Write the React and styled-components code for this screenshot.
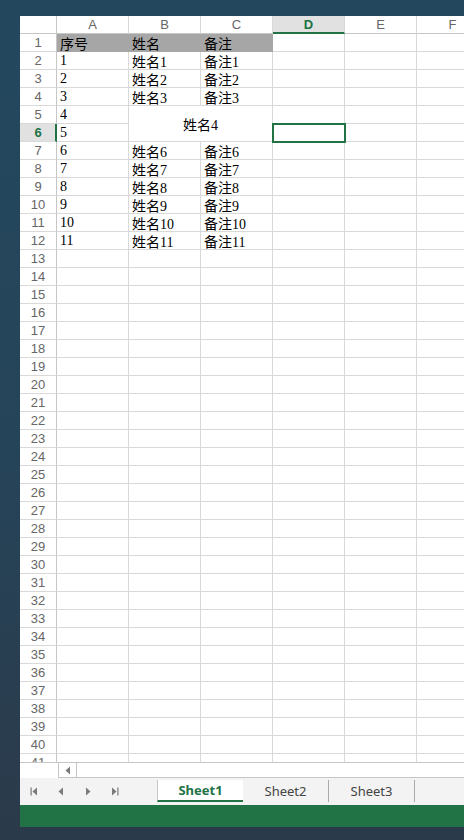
import React from 'react';
import styled, { createGlobalStyle, css } from 'styled-components';

const GlobalStyle = createGlobalStyle`
  html, body { margin: 0; padding: 0; height: 100%; }
  body { overflow: hidden; }
  #root { height: 100%; }
`;

const green = '#217346';
const gridLine = '#d9d9d9';
const headLine = '#c6c6c6';

const Desktop = styled.div`
  height: 840px;
  box-sizing: border-box;
  padding: 16px 0 13px 20px;
  background: linear-gradient(to bottom, #23485e 0%, #264459 55%, #2b3a4a 100%);
  display: flex;
`;

const Window = styled.div`
  flex: 1;
  background: #fff;
  display: flex;
  flex-direction: column;
  overflow: hidden;
`;

const SheetArea = styled.div`
  flex: 1;
  overflow: hidden;
`;

const Grid = styled.div`
  display: grid;
  grid-template-columns: 37px repeat(6, 72px);
  grid-auto-rows: 18px;
  width: max-content;
`;

const Corner = styled.div`
  box-sizing: border-box;
  border-right: 1px solid ${headLine};
  border-bottom: 1px solid ${headLine};
`;

const ColHead = styled.div`
  box-sizing: border-box;
  display: flex;
  align-items: center;
  justify-content: center;
  font-family: "Liberation Sans", "Noto Sans", sans-serif;
  font-size: 13px;
  color: #666;
  border-right: 1px solid ${gridLine};
  border-bottom: 1px solid ${headLine};
  ${({ $active }) => $active && css`
    background: #e1e1e1;
    color: ${green};
    font-weight: bold;
    border-bottom: 2px solid ${green};
    padding-top: 1px;
  `}
`;

const RowHead = styled.div`
  box-sizing: border-box;
  display: flex;
  align-items: center;
  justify-content: center;
  font-family: "Liberation Sans", "Noto Sans", sans-serif;
  font-size: 13px;
  color: #666;
  border-right: 1px solid ${headLine};
  border-bottom: 1px solid ${gridLine};
  ${({ $active }) => $active && css`
    background: #e1e1e1;
    color: ${green};
    font-weight: bold;
    border-right: 2px solid ${green};
    padding-left: 1px;
  `}
`;

const Cell = styled.div`
  box-sizing: border-box;
  display: flex;
  align-items: center;
  padding: 1px 0 0 3px;
  font-family: "Liberation Serif", "Noto Sans CJK SC", serif;
  font-size: 14px;
  color: #000;
  white-space: nowrap;
  border-right: 1px solid ${gridLine};
  border-bottom: 1px solid ${gridLine};
  ${({ $fill }) => $fill && css`
    background: ${$fill};
    border-color: ${$fill};
  `}
  ${({ $merged }) => $merged && css`
    grid-column: span 2;
    grid-row: span 2;
    justify-content: center;
    padding-left: 0;
  `}
  ${({ $selected }) => $selected && css`
    position: relative;
    z-index: 1;
    outline: 2px solid ${green};
    outline-offset: -1px;
  `}
`;

const ScrollRow = styled.div`
  height: 16px;
  display: flex;
  flex-shrink: 0;
`;

const ScrollSpacer = styled.div`
  width: 38px;
  border-top: 1px solid ${headLine};
`;

const ScrollTrack = styled.div`
  flex: 1;
  display: flex;
  box-sizing: border-box;
  border: 1px solid ${headLine};
  border-right: none;
`;

const ScrollBtn = styled.div`
  width: 17px;
  display: flex;
  align-items: center;
  justify-content: center;
  border-right: 1px solid ${headLine};
`;

const TabBar = styled.div`
  height: 27px;
  flex-shrink: 0;
  background: #f3f3f3;
  display: flex;
  align-items: stretch;
`;

const NavGroup = styled.div`
  width: 137px;
  box-sizing: border-box;
  display: flex;
  align-items: center;
`;

const NavBtn = styled.div`
  width: 27px;
  display: flex;
  align-items: center;
  justify-content: center;
`;

const Tab = styled.div`
  width: 86px;
  box-sizing: border-box;
  margin: 2px 0 3px;
  display: flex;
  align-items: center;
  justify-content: center;
  font-family: "Noto Sans", "Liberation Sans", sans-serif;
  font-size: 13px;
  color: #444;
  border-right: 1px solid #aaa;
  ${({ $active }) => $active && css`
    background: #fff;
    color: ${green};
    font-weight: bold;
    border-left: 1px solid #c6c6c6;
    border-right: none;
    border-bottom: 2px solid ${green};
  `}
`;

const StatusBar = styled.div`
  height: 22px;
  flex-shrink: 0;
  background: ${green};
`;

const Arrow = ({ dir, bar }) => (
  <svg width="8" height="9" viewBox="0 0 8 9">
    {bar && dir === 'left' && <rect x="0.5" y="0.5" width="1.2" height="8" fill="#7a7a7a" />}
    {dir === 'left'
      ? <polygon points={bar ? '7,0.5 7,8.5 2.5,4.5' : '6,0.5 6,8.5 1.5,4.5'} fill="#7a7a7a" />
      : <polygon points={bar ? '1,0.5 1,8.5 5.5,4.5' : '2,0.5 2,8.5 6.5,4.5'} fill="#7a7a7a" />}
    {bar && dir === 'right' && <rect x="6.3" y="0.5" width="1.2" height="8" fill="#7a7a7a" />}
  </svg>
);

const cols = ['A', 'B', 'C', 'D', 'E', 'F'];

const data = {
  1: ['序号', '姓名', '备注'],
  2: ['1', '姓名1', '备注1'],
  3: ['2', '姓名2', '备注2'],
  4: ['3', '姓名3', '备注3'],
  5: ['4'],
  6: ['5'],
};
for (let i = 7; i <= 12; i++) data[i] = [String(i - 1), `姓名${i - 1}`, `备注${i - 1}`];

const renderRow = (r) => {
  const vals = data[r] || [];
  const cells = [];
  cols.forEach((c, ci) => {
    if (r === 5 && c === 'B') {
      cells.push(<Cell key={c} $merged>姓名4</Cell>);
      return;
    }
    if ((r === 5 || r === 6) && c === 'C') return;
    if (r === 6 && c === 'B') return;
    cells.push(
      <Cell
        key={c}
        $fill={r === 1 && ci < 3 ? '#a6a6a6' : undefined}
        $selected={r === 6 && c === 'D'}
      >
        {vals[ci] || ''}
      </Cell>
    );
  });
  return (
    <React.Fragment key={r}>
      <RowHead $active={r === 6}>{r}</RowHead>
      {cells}
    </React.Fragment>
  );
};

export default function App() {
  const rows = Array.from({ length: 41 }, (_, i) => i + 1);
  return (
    <>
      <GlobalStyle />
      <Desktop>
        <Window>
          <SheetArea>
            <Grid>
              <Corner />
              {cols.map((c) => (
                <ColHead key={c} $active={c === 'D'}>{c}</ColHead>
              ))}
              {rows.map(renderRow)}
            </Grid>
          </SheetArea>
          <ScrollRow>
            <ScrollSpacer />
            <ScrollTrack>
              <ScrollBtn><Arrow dir="left" /></ScrollBtn>
            </ScrollTrack>
          </ScrollRow>
          <TabBar>
            <NavGroup>
              <NavBtn><Arrow dir="left" bar /></NavBtn>
              <NavBtn><Arrow dir="left" /></NavBtn>
              <NavBtn><Arrow dir="right" /></NavBtn>
              <NavBtn><Arrow dir="right" bar /></NavBtn>
            </NavGroup>
            <Tab $active>Sheet1</Tab>
            <Tab>Sheet2</Tab>
            <Tab>Sheet3</Tab>
          </TabBar>
          <StatusBar />
        </Window>
      </Desktop>
    </>
  );
}
